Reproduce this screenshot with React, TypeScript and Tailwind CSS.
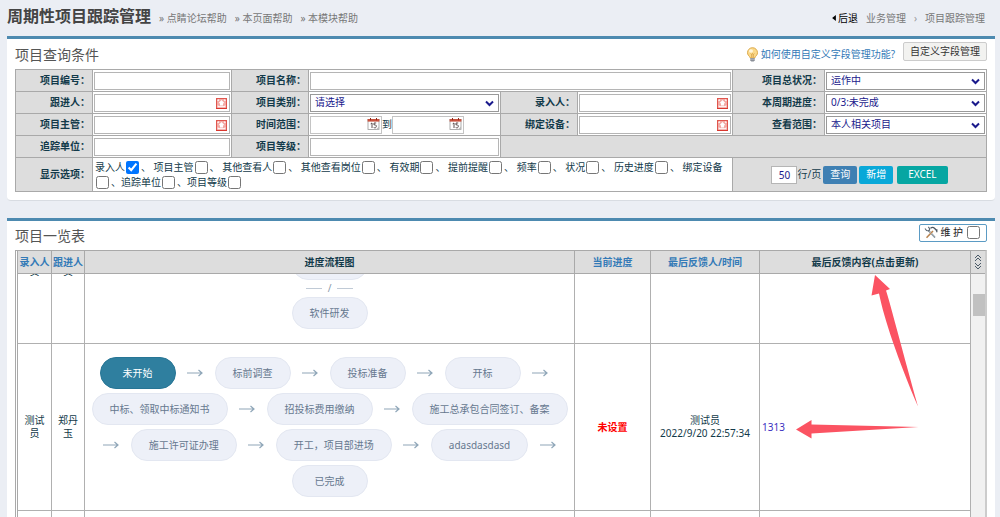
import { useEffect, useRef } from "react";
import type { ReactNode } from "react";
import clsx from "clsx";

const displayOptions = [
  { label: "录入人", checked: true, sep: "、 " },
  { label: "项目主管", sep: "、 " },
  { label: "其他查看人", sep: "、 " },
  { label: "其他查看岗位", sep: "、 " },
  { label: "有效期", sep: "、 " },
  { label: "提前提醒", sep: "、 " },
  { label: "频率", sep: "、 " },
  { label: "状况", sep: "、 " },
  { label: "历史进度", sep: "、 " },
  { label: "绑定设备", sep: "、" },
  { label: "追踪单位", sep: "、" },
  { label: "项目等级", sep: "" },
];

const steps = [
  "未开始",
  "标前调查",
  "投标准备",
  "开标",
  "中标、领取中标通知书",
  "招投标费用缴纳",
  "施工总承包合同签订、备案",
  "施工许可证办理",
  "开工，项目部进场",
  "adasdasdasd",
  "已完成",
];

function BulbIcon() {
  return (
    <svg width="13" height="15" viewBox="0 0 13 15" aria-hidden="true">
      <path d="M6.5 .7a5 5 0 0 0-5 5c0 2 1.200 2.900 2 3.900.4.5.5.9.6 1.400h4.800c.1-.5.2-.9.6-1.400.8-1 2-1.900 2-3.900a5 5 0 0 0-5-5z" fill="#fbd98a" stroke="#d9a441" strokeWidth=".9" />
      <ellipse cx="5" cy="4" rx="2" ry="1.700" fill="#fff6dc" />
      <path d="M4.700 6.500l1 1 .8-1 .8 1 1-1M5.700 7.500v3M7.300 7.500v3" stroke="#c98a2b" strokeWidth=".6" fill="none" />
      <path d="M4.300 11h4.400v2.200l-1 1.300H5.300l-1-1.300z" fill="#8a8f98" />
      <path d="M4.300 12.200h4.400" stroke="#d5d8dc" strokeWidth=".6" />
    </svg>
  );
}

function PickIcon() {
  return (
    <svg width="11" height="11" viewBox="0 0 11 11" aria-hidden="true">
      <rect x=".5" y=".5" width="10" height="10" fill="#f3a9a4" stroke="#e0564e" />
      <path d="M5.500 2l3 3.200H7V7.500H4V5.200H2.500z" fill="#fff" />
      <path d="M2 3v-1h1M9 3v-1H8M2 7.500v1.200h7V7.500" stroke="#fff" fill="none" />
      <path d="M0 10.500h11" stroke="#d9372f" />
    </svg>
  );
}

function CalendarIcon() {
  return (
    <svg width="13" height="12" viewBox="0 0 13 12" aria-hidden="true">
      <rect x="1" y="1.500" width="11" height="10" fill="#fff" stroke="#9a9a9a" strokeWidth=".8" />
      <rect x=".6" y="1" width="11.800" height="2.600" fill="#c9503c" />
      <path d="M3.500 0v2.200M9.500 0v2.200" stroke="#8f2d1f" />
      <path d="M3.700 5.800l1.300-.8v5M9.200 5H7v2c1.300-.5 2.300 0 2.300 1.400S8 10.200 6.700 9.500" stroke="#4a3a3a" strokeWidth=".9" fill="none" />
      <path d="M12 8.500v3H9z" fill="#b9b9b9" />
    </svg>
  );
}

function ToolsIcon() {
  return (
    <svg width="14" height="13" viewBox="0 0 14 13" fill="none" aria-hidden="true">
      <path d="M4.500 4.500l6.500 7" stroke="#6f7f8c" strokeWidth="1.600" />
      <path d="M1 2.500l1.500 2 2.500.3.800-2L4.300.8" stroke="#5b6670" strokeWidth="1.100" />
      <path d="M9 5l-6.500 6.700" stroke="#b9834f" strokeWidth="1.600" />
      <path d="M6.500 2.200C8 1 9.500 1.200 10.500 2.300l2.300 2.400M12.800 3.300v3" stroke="#4c5660" strokeWidth="1.300" />
      <path d="M5.200 5.200l5.500 6" stroke="#d6dde2" strokeWidth=".6" />
    </svg>
  );
}

function Cell({ className, children }: { className?: string; children?: ReactNode }) {
  return <div className={clsx("flex min-w-0 items-center border-r border-b border-[#a9a9a9]", className)}>{children}</div>;
}

function LabelCell({ id, children }: { id?: string; children: ReactNode }) {
  return (
    <Cell className="justify-end bg-[#ddd] pr-0.5 font-bold">
      <label htmlFor={id}>{children}</label>
    </Cell>
  );
}

function TextBox({ id, icon }: { id: string; icon?: ReactNode }) {
  return (
    <div className="relative w-full px-px">
      <input id={id} type="text" className="block h-[18px] w-full border border-[#b5b5b5] bg-white px-1 text-[#1a1a8c]" />
      {icon && <span className="absolute top-1 right-1">{icon}</span>}
    </div>
  );
}

function SelectBox({ id, value }: { id: string; value: string }) {
  return (
    <div className="relative w-full px-px">
      <select id={id} className="block h-[18px] w-full appearance-none border border-[#999] bg-white px-1 text-[#1a1a8c]">
        <option>{value}</option>
      </select>
      <svg className="absolute top-1.5 right-1.5" width="9" height="7" viewBox="0 0 9 7" aria-hidden="true">
        <path d="M1 1.500l3.500 3.500L8 1.500" stroke="#1a1a8c" strokeWidth="2" fill="none" />
      </svg>
    </div>
  );
}

function DateBox({ label }: { label: string }) {
  return (
    <div className="relative">
      <input type="text" aria-label={label} className="block h-[18px] w-[72px] border border-[#c4c4c4] bg-white px-1" />
      <span className="absolute top-0.5 right-0.5">
        <CalendarIcon />
      </span>
    </div>
  );
}

function CheckBox({ id, checked }: { id: string; checked?: boolean }) {
  return <input id={id} type="checkbox" defaultChecked={checked} className="mr-0.5 ml-px size-[13px] align-middle" />;
}

function Pill({ active, children }: { active?: boolean; children: ReactNode }) {
  return (
    <span
      className={clsx(
        "flex h-8 min-w-[76px] items-center justify-center rounded-full border px-[17px] whitespace-nowrap",
        active ? "border-[#277595] bg-[#2f7f9f] text-white" : "border-[#e3e7f1] bg-[#edf0f8] text-[#66788f]"
      )}
    >
      {children}
    </span>
  );
}

function Arrow() {
  return (
    <span className="flex h-8 w-[39px] items-center justify-center">
      <svg width="16" height="8" viewBox="0 0 16 8" fill="none" stroke="#8fa6b8" aria-hidden="true">
        <path d="M0 4h15M11.500 1L15 4l-3.500 3" strokeWidth="1.200" />
      </svg>
    </span>
  );
}

function BranchFlow({ items }: { items: string[] }) {
  return (
    <div className="flex flex-col items-center pt-[13px] pb-3.5">
      {items.map((item, i) => (
        <div key={item} className="flex flex-col items-center">
          {i > 0 && (
            <div className="flex h-[17px] items-center gap-1 text-[#8899aa]">
              <span className="h-px w-4 bg-[#c0cad6]" />
              <span className="px-0.5">/</span>
              <span className="h-px w-4 bg-[#c0cad6]" />
            </div>
          )}
          <Pill>{item}</Pill>
        </div>
      ))}
    </div>
  );
}

const th = "h-[23px] border-r border-b border-[#a9a9a9] bg-[#ddd] p-0 font-bold whitespace-nowrap";
const td = "border-r border-b border-[#b0b0b0] p-0 text-center";

function ProjectTable() {
  const scroller = useRef<HTMLDivElement>(null);

  useEffect(() => {
    if (scroller.current) scroller.current.scrollTop = 88;
  }, []);

  return (
    <div className="mx-2 flex min-h-0 flex-1 border-t border-r-2 border-l border-t-[#a9a9a9] border-r-[#ccc] border-l-[#a9a9a9] pl-px">
      <div ref={scroller} className="min-w-0 flex-1 overflow-y-auto border-l border-[#a9a9a9] [scrollbar-width:none]">
        <table className="w-full table-fixed border-separate border-spacing-0 leading-[13px]">
          <colgroup>
            <col className="w-[34px]" />
            <col className="w-[33px]" />
            <col />
            <col className="w-[76px]" />
            <col className="w-[109px]" />
            <col className="w-[211px]" />
          </colgroup>
          <thead className="sticky top-0 z-10">
            <tr>
              <th className={th}><a href="#" className="text-[#337ab7]">录入人</a></th>
              <th className={th}><a href="#" className="text-[#337ab7]">跟进人</a></th>
              <th className={th}>进度流程图</th>
              <th className={th}><a href="#" className="text-[#337ab7]">当前进度</a></th>
              <th className={th}><a href="#" className="text-[#337ab7]">最后反馈人/时间</a></th>
              <th className={th}>最后反馈内容(点击更新)</th>
            </tr>
          </thead>
          <tbody>
            <tr>
              <td className={td}>测试<br />员</td>
              <td className={td}>测试<br />员</td>
              <td className={td}><BranchFlow items={["需求调研", "方案设计", "软件研发"]} /></td>
              <td className={td}></td>
              <td className={td}></td>
              <td className={td}></td>
            </tr>
            <tr>
              <td className={td}>测试<br />员</td>
              <td className={td}>郑丹<br />玉</td>
              <td className={td}>
                <div className="flex flex-wrap justify-center gap-y-1 pt-[13px] pb-[13px]">
                  {steps.map((step, i) => (
                    <div key={step} className="contents">
                      <Pill active={i === 0}>{step}</Pill>
                      {i < steps.length - 1 && <Arrow />}
                    </div>
                  ))}
                </div>
              </td>
              <td className={clsx(td, "font-bold text-[#f00]")}>未设置</td>
              <td className={td}>测试员<br />2022/9/20 22:57:34</td>
              <td className={clsx(td, "text-left")}>
                <a href="#" className="px-0.5 text-[#3a2fc0]">1313</a>
              </td>
            </tr>
            <tr className="h-40">
              <td className={td}></td>
              <td className={td}></td>
              <td className={td}></td>
              <td className={td}></td>
              <td className={td}></td>
              <td className={td}></td>
            </tr>
          </tbody>
        </table>
      </div>
      <div className="flex w-3.5 flex-col bg-[#f1f1f1]">
        <div className="flex h-[23px] items-center justify-center border-b border-[#a9a9a9] bg-[#ddd]">
          <svg width="8" height="16" viewBox="0 0 8 16" fill="none" stroke="#4a5a68" aria-hidden="true">
            <path d="M1 4l3-3 3 3M1 7l3-3 3 3M1 9l3 3 3-3M1 12l3 3 3-3" />
          </svg>
        </div>
        <div className="mt-5 ml-0.5 h-[22px] bg-[#c1c1c1]" />
      </div>
    </div>
  );
}

export default function App() {
  return (
    <div className="relative flex h-screen flex-col overflow-hidden bg-[#ebeef4] pr-[5px] pl-[7px] font-['Noto_Sans','Noto_Sans_CJK_SC',sans-serif] text-[10px] leading-[15px] text-[#123a4a]">
      <header className="flex h-9 shrink-0 items-center pr-2.5">
        <h1 className="mb-1 text-[16px] leading-6 font-bold text-[#444]">周期性项目跟踪管理</h1>
        <nav className="ml-2 flex gap-2 text-[#777]">
          <a href="#">» 点睛论坛帮助</a>
          <a href="#">» 本页面帮助</a>
          <a href="#">» 本模块帮助</a>
        </nav>
        <nav className="ml-auto flex items-center gap-2 text-[#777]">
          <a href="#" className="flex items-center gap-0.5 text-black">
            <svg width="4" height="6" viewBox="0 0 5 8" aria-hidden="true"><path d="M5 0v8L0 4z" /></svg>
            后退
          </a>
          <a href="#">业务管理</a>
          <span className="text-[#999]">›</span>
          <a href="#">项目跟踪管理</a>
        </nav>
      </header>

      {/* Query form */}
      <section className="shrink-0 rounded-b border-t-[3px] border-b border-t-[#4d8ab0] border-b-[#d8dce2] bg-white px-2 pb-2">
        <div className="flex h-[30px] items-center">
          <h2 className="text-[14px] text-[#555]">项目查询条件</h2>
          <a href="#" className="ml-auto flex items-center gap-0.5 text-[#337ab7]">
            <BulbIcon />
            如何使用自定义字段管理功能?
          </a>
          <button className="mb-2 ml-2 h-[19px] self-end rounded-xs border border-[#ccc] bg-[#f2f2f0] px-1.5 text-[#333]">自定义字段管理</button>
        </div>

        <form className="grid grid-cols-[77px_139fr_77px_192fr_77px_155fr_92px_162fr] grid-rows-[repeat(4,22px)_34px] border-t border-l border-[#a9a9a9]">
          <LabelCell id="code">项目编号：</LabelCell>
          <Cell><TextBox id="code" /></Cell>
          <LabelCell id="name">项目名称：</LabelCell>
          <Cell className="col-span-3"><TextBox id="name" /></Cell>
          <LabelCell id="state">项目总状况：</LabelCell>
          <Cell><SelectBox id="state" value="运作中" /></Cell>

          <LabelCell id="follower">跟进人：</LabelCell>
          <Cell><TextBox id="follower" icon={<PickIcon />} /></Cell>
          <LabelCell id="type">项目类别：</LabelCell>
          <Cell><SelectBox id="type" value="请选择" /></Cell>
          <LabelCell id="creator">录入人：</LabelCell>
          <Cell><TextBox id="creator" icon={<PickIcon />} /></Cell>
          <LabelCell id="progress">本周期进度：</LabelCell>
          <Cell><SelectBox id="progress" value="0/3:未完成" /></Cell>

          <LabelCell id="manager">项目主管：</LabelCell>
          <Cell><TextBox id="manager" icon={<PickIcon />} /></Cell>
          <LabelCell>时间范围：</LabelCell>
          <Cell className="pl-px">
            <DateBox label="开始日期" />
            到
            <DateBox label="结束日期" />
          </Cell>
          <LabelCell id="device">绑定设备：</LabelCell>
          <Cell><TextBox id="device" icon={<PickIcon />} /></Cell>
          <LabelCell id="scope">查看范围：</LabelCell>
          <Cell><SelectBox id="scope" value="本人相关项目" /></Cell>

          <LabelCell id="unit">追踪单位：</LabelCell>
          <Cell><TextBox id="unit" /></Cell>
          <LabelCell id="level">项目等级：</LabelCell>
          <Cell><TextBox id="level" /></Cell>
          <Cell className="col-span-4 bg-[#ddd]" />

          <LabelCell>显示选项：</LabelCell>
          <Cell className="col-span-5 px-0.5">
            <p>
              {displayOptions.map((o, i) => (
                <span key={o.label}>
                  <label htmlFor={"opt" + i}>{o.label}</label>
                  <CheckBox id={"opt" + i} checked={o.checked} />
                  {o.sep}
                </span>
              ))}
            </p>
          </Cell>
          <Cell className="col-span-2 justify-center bg-[#ddd]">
            <input id="rows" type="text" defaultValue="50" className="h-[18px] w-[26px] border border-[#b5b5b5] bg-white text-center text-[#1a1a8c]" />
            <label htmlFor="rows">行/页</label>
            <button type="button" className="ml-0.5 h-[18px] rounded-xs bg-[#3f80b3] px-[7px] text-white">查询</button>
            <button type="button" className="ml-0.5 h-[18px] rounded-xs bg-[#09a8d8] px-[7px] text-white">新增</button>
            <button type="button" className="ml-1 h-[18px] rounded-xs bg-[#06a6a2] px-[11px] text-white">EXCEL</button>
          </Cell>
        </form>
      </section>

      {/* Project list */}
      <section className="mt-[17px] flex min-h-0 flex-1 flex-col border-t-[3px] border-[#4d8ab0] bg-white">
        <div className="flex h-[29px] shrink-0 items-center px-2">
          <h2 className="text-[14px] text-[#555]">项目一览表</h2>
          <label className="mb-1.5 ml-auto flex h-[18px] items-center gap-0.5 rounded-xs border border-[#5b9bc4] pr-1.5 pl-1 text-[#222]">
            <ToolsIcon />
            维 护
            <input type="checkbox" className="ml-0.5 size-[13px]" />
          </label>
        </div>
        <ProjectTable />
      </section>

      {/* Hint arrows over the feedback column */}
      <svg className="pointer-events-none absolute top-[275px] right-[81px] z-20" width="123" height="164" viewBox="0 0 123 164" fill="#fb5362" aria-hidden="true">
        <path d="M79 0l15 14-4 1.500c4 12 12 44 32 116-20-47-34-88-39-113l-7.500 2z" />
        <path d="M0 154.500l15.500-9.500v4.500l107 2.500-107 6.500v5z" />
      </svg>
    </div>
  );
}
